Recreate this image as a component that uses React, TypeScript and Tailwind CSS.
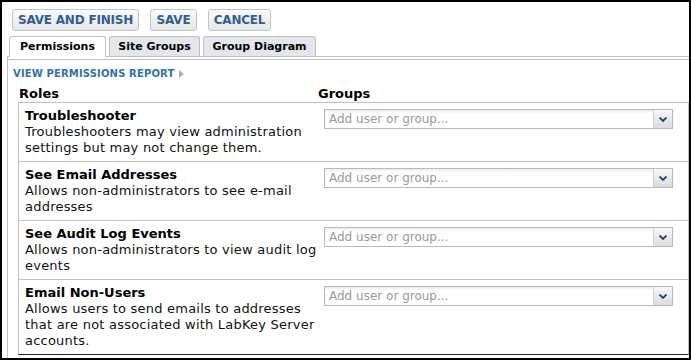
import React from "react";

const roles = [
  {
    title: "Troubleshooter",
    desc: "Troubleshooters may view administration settings but may not change them.",
  },
  {
    title: "See Email Addresses",
    desc: "Allows non-administrators to see e-mail addresses",
  },
  {
    title: "See Audit Log Events",
    desc: "Allows non-administrators to view audit log events",
  },
  {
    title: "Email Non-Users",
    desc: "Allows users to send emails to addresses that are not associated with LabKey Server accounts.",
  },
];

function Btn({ label, w }: { label: string; w: string }) {
  return (
    <div
      className={`${w} h-[22px] flex items-center justify-center rounded-[3px] border border-[#c4c4c4] bg-gradient-to-b from-[#fbfbfb] to-[#e6e6e6] text-[12px] font-bold text-[#2e5f92] leading-none tracking-[-0.2px]`}
    >
      {label}
    </div>
  );
}

function Combo() {
  return (
    <div className="w-[349px] h-[20px] mt-[1px] flex border border-[#b5b8c8]">
      <div className="flex-1 flex items-center pl-[4px] bg-gradient-to-b from-[#ececec] via-white via-[20%] to-white text-[12px] text-[#9a9a9a] leading-none">
        Add user or group...
      </div>
      <div className="w-[19px] flex items-center justify-center bg-gradient-to-b from-[#f7f7f7] to-[#dcdcdc] border-l border-[#d0d3dc]">
        <svg width="8" height="5" viewBox="0 0 8 5">
          <path d="M0.5 0.5 L4 4 L7.5 0.5" fill="none" stroke="#1f3f78" strokeWidth="1.8" />
        </svg>
      </div>
    </div>
  );
}

export default function App() {
  return (
    <div className="w-[691px] h-[361px] bg-white overflow-hidden font-['DejaVu_Sans',Verdana,sans-serif] text-black">
      <div className="w-[691px] h-[360px] border-2 border-black overflow-hidden flex flex-col">
        <div className="flex gap-[11px] pl-[10px] pt-[7px]">
          <Btn label="SAVE AND FINISH" w="w-[127px]" />
          <Btn label="SAVE" w="w-[47px]" />
          <Btn label="CANCEL" w="w-[63px]" />
        </div>
        <div className="ml-[5px] mt-[5px] flex-1 flex flex-col">
          <div className="flex items-start gap-[3px] pl-[2px] border-b border-[#c0c0c0] h-[21px]">
            <div className="w-[97px] h-[21px] flex items-center justify-center border border-b-0 border-[#c0c0c0] rounded-t-[3px] bg-white text-[11px] font-bold leading-none pb-[1px]">
              Permissions
            </div>
            <div className="w-[91px] h-[20px] flex items-center justify-center border border-b-0 border-[#c0c0c0] rounded-t-[3px] bg-[#e3e7eb] text-[11px] font-bold leading-none">
              Site Groups
            </div>
            <div className="w-[113px] h-[20px] flex items-center justify-center border border-b-0 border-[#c0c0c0] rounded-t-[3px] bg-[#e3e7eb] text-[11px] font-bold leading-none">
              Group Diagram
            </div>
          </div>
          <div className="h-[3px] border-l border-b border-[#c0c0c0]" />
          <div className="flex-1 border-l border-[#c0c0c0] pl-[5px] pt-[8px]">
            <div className="flex items-center h-[12px] gap-[5px]">
              <span className="text-[10px] font-bold leading-[12px] text-[#3172aa] tracking-[0.15px]">
                VIEW PERMISSIONS REPORT
              </span>
              <svg width="5" height="8" viewBox="0 0 5 8">
                <path d="M0 0 L5 4 L0 8 Z" fill="#b0b0b0" />
              </svg>
            </div>
            <div className="ml-[5px] mt-[6px] w-[671px]">
              <div className="flex h-[16px] text-[13px] font-bold leading-[16px]">
                <div className="w-[300px] pl-[1px]">Roles</div>
                <div>Groups</div>
              </div>
              <div className="border-l border-r border-t border-[#c0c0c0] border-b border-b-[#222]">
                {roles.map((r, i) => (
                  <div
                    key={r.title}
                    className={`flex ${i > 0 ? "border-t border-[#c0c0c0]" : ""}`}
                  >
                    <div className="w-[299px] pl-[6px] py-[5px] text-[13px] leading-[16px]">
                      <div className="w-[293px] font-bold">{r.title}</div>
                      <div className="w-[293px] text-[#111] tracking-[0.22px]">{r.desc}</div>
                    </div>
                    <div className="pl-[6px] pt-[5px]">
                      <Combo />
                    </div>
                  </div>
                ))}
              </div>
            </div>
          </div>
        </div>
      </div>
    </div>
  );
}
